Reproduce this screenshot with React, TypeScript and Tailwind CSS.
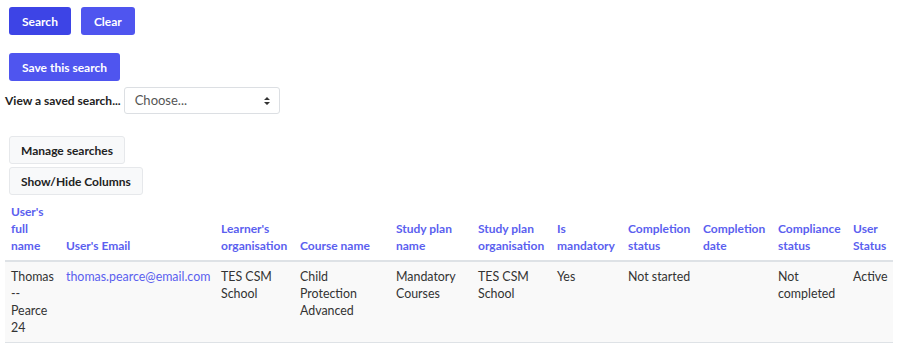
import React from "react";

const cols: { label: string; w: string }[] = [
  { label: "User's full name", w: "w-[55px]" },
  { label: "User's Email", w: "w-[155px]" },
  { label: "Learner's organisation", w: "w-[79px]" },
  { label: "Course name", w: "w-[96px]" },
  { label: "Study plan name", w: "w-[82px]" },
  { label: "Study plan organisation", w: "w-[79px]" },
  { label: "Is mandatory", w: "w-[71px]" },
  { label: "Completion status", w: "w-[75px]" },
  { label: "Completion date", w: "w-[75px]" },
  { label: "Compliance status", w: "w-[75px]" },
  { label: "User Status", w: "w-[46px]" },
];

export default function App() {
  return (
    <div className="bg-white w-[903px] h-[348px] overflow-hidden text-[12.4px] leading-[17px] text-[#333]" style={{ fontFamily: "Lato, 'Noto Sans', sans-serif" }}>
      <div className="pl-[9px] pt-[7px] flex gap-[10px]">
        <button className="h-[28px] px-[13px] rounded-[3px] bg-[#3d44e6] text-white font-bold text-[12px]">Search</button>
        <button className="h-[28px] px-[13px] rounded-[3px] bg-[#4f55ef] text-white font-bold text-[12px]">Clear</button>
      </div>
      <div className="pl-[9px] pt-[18px]">
        <button className="h-[28px] px-[13px] rounded-[3px] bg-[#4f55ef] text-white font-bold text-[12px]">Save this search</button>
      </div>
      <div className="pl-[5px] pt-[6px] flex items-center gap-[3px]">
        <span className="font-bold text-[12px] text-[#222]">View a saved search...</span>
        <div className="w-[156px] h-[27px] border border-[#dcdfe3] rounded-[3px] flex items-center justify-between pl-[10px] pr-[8px] text-[13px] text-[#555]">
          <span>Choose...</span>
          <svg width="8" height="10" viewBox="0 0 8 10"><path d="M1 4 L4 1 L7 4 Z M1 6 L4 9 L7 6 Z" fill="#333" /></svg>
        </div>
      </div>
      <div className="pl-[9px] pt-[22px] flex flex-col items-start gap-[3px]">
        <button className="h-[28px] px-[11px] rounded-[3px] bg-[#f8f9fa] border border-[#e6e8eb] text-[#222] font-bold text-[12px]">Manage searches</button>
        <button className="h-[28px] px-[11px] rounded-[3px] bg-[#f8f9fa] border border-[#e6e8eb] text-[#222] font-bold text-[12px]">Show/Hide Columns</button>
      </div>
      <table className="ml-[5px] mt-[2px] w-[888px] table-fixed border-collapse">
        <thead>
          <tr className="border-b-2 border-[#dee2e6]">
            {cols.map((c) => (
              <th key={c.label} className={`${c.w} px-[6px] pt-[6px] pb-[6px] align-bottom text-left font-bold text-[12px] text-[#5b5fef]`}>
                {c.label}
              </th>
            ))}
          </tr>
        </thead>
        <tbody>
          <tr className="bg-[#f9f9f9] border-b border-[#dee2e6] align-top">
            <td className="px-[6px] py-[6px]">Thomas -- Pearce 24</td>
            <td className="px-[6px] py-[6px] text-[#5b5fef] whitespace-nowrap">thomas.pearce@email.com</td>
            <td className="px-[6px] py-[6px]">TES CSM School</td>
            <td className="px-[6px] py-[6px]">Child Protection Advanced</td>
            <td className="px-[6px] py-[6px]">Mandatory Courses</td>
            <td className="px-[6px] py-[6px]">TES CSM School</td>
            <td className="px-[6px] py-[6px]">Yes</td>
            <td className="px-[6px] py-[6px] whitespace-nowrap">Not started</td>
            <td className="px-[6px] py-[6px]"></td>
            <td className="px-[6px] py-[6px]">Not completed</td>
            <td className="px-[6px] py-[6px]">Active</td>
          </tr>
        </tbody>
      </table>
    </div>
  );
}
